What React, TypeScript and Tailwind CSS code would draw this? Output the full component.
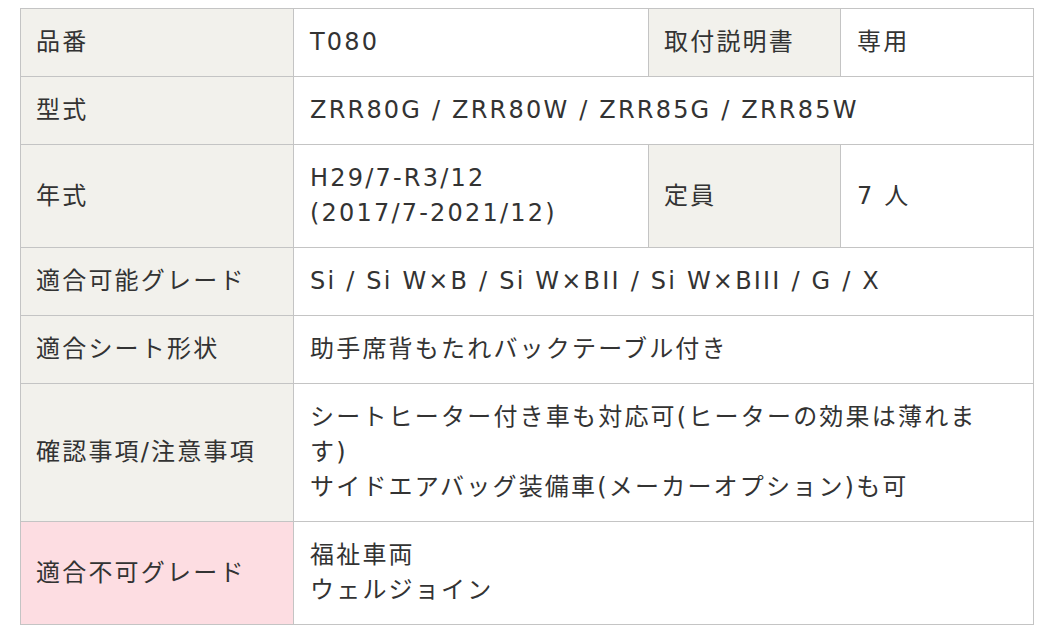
export default function App() {
  const th =
    "bg-[#f2f1ec] border border-[#c4c4c4] px-[15px] py-[16px] text-left font-normal align-middle";
  const td = "bg-white border border-[#c4c4c4] px-[16px] py-[16px] text-left font-normal align-middle";

  return (
    <div
      className="bg-white min-h-screen pt-[8px] pl-[20px] text-[#333] text-[24px] leading-[35px] tracking-[2.2px]"
      style={{ fontFamily: '"DejaVu Sans", "Noto Sans CJK JP", sans-serif' }}
    >
      <table className="border-collapse w-[1013px] table-fixed">
        <colgroup>
          <col className="w-[273px]" />
          <col className="w-[355px]" />
          <col className="w-[192px]" />
          <col className="w-[193px]" />
        </colgroup>
        <tbody>
          <tr>
            <th className={th}>品番</th>
            <td className={td}>T080</td>
            <th className={th}>取付説明書</th>
            <td className={td}>専用</td>
          </tr>
          <tr>
            <th className={th}>型式</th>
            <td className={td} colSpan={3}>
              ZRR80G / ZRR80W / ZRR85G / ZRR85W
            </td>
          </tr>
          <tr>
            <th className={th}>年式</th>
            <td className={td}>
              H29/7-R3/12
              <br />
              (2017/7-2021/12)
            </td>
            <th className={th}>定員</th>
            <td className={td}>7 人</td>
          </tr>
          <tr>
            <th className={th}>適合可能グレード</th>
            <td className={td} colSpan={3}>
              Si / Si W×B / Si W×BII / Si W×BIII / G / X
            </td>
          </tr>
          <tr>
            <th className={th}>適合シート形状</th>
            <td className={td} colSpan={3}>
              助手席背もたれバックテーブル付き
            </td>
          </tr>
          <tr>
            <th className={th}>確認事項/注意事項</th>
            <td className={td + " pr-[30px]"} colSpan={3}>
              シートヒーター付き車も対応可(ヒーターの効果は薄れます)
              <br />
              サイドエアバッグ装備車(メーカーオプション)も可
            </td>
          </tr>
          <tr>
            <th className={th + " !bg-[#fddde2]"}>適合不可グレード</th>
            <td className={td} colSpan={3}>
              福祉車両
              <br />
              ウェルジョイン
            </td>
          </tr>
        </tbody>
      </table>
    </div>
  );
}
